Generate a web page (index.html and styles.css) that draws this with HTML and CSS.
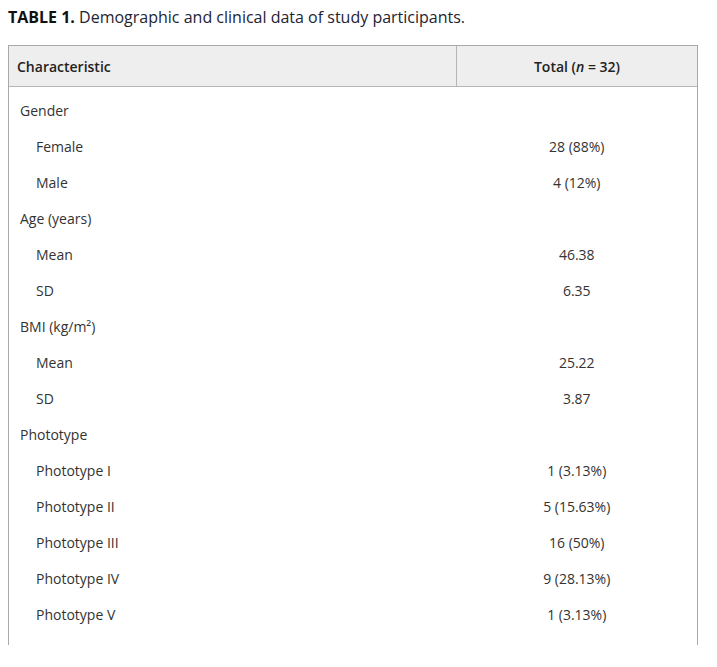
FILE: index.html
```html
<!DOCTYPE html>
<html>
<head>
<meta charset="utf-8">
<link rel="stylesheet" href="styles.css">
</head>
<body>
<div class="caption"><b>TABLE 1.</b> Demographic and clinical data of study participants.</div>
<div class="table-wrap">
<table class="data">
<thead>
<tr><th class="c1">Characteristic</th><th class="c2">Total (<i>n</i> = 32)</th></tr>
</thead>
<tbody>
<tr class="first"><td class="lvl1">Gender</td><td></td></tr>
<tr><td class="lvl2">Female</td><td class="val">28 (88%)</td></tr>
<tr><td class="lvl2">Male</td><td class="val">4 (12%)</td></tr>
<tr><td class="lvl1">Age (years)</td><td></td></tr>
<tr><td class="lvl2">Mean</td><td class="val">46.38</td></tr>
<tr><td class="lvl2">SD</td><td class="val">6.35</td></tr>
<tr><td class="lvl1">BMI (kg/m²)</td><td></td></tr>
<tr><td class="lvl2">Mean</td><td class="val">25.22</td></tr>
<tr><td class="lvl2">SD</td><td class="val">3.87</td></tr>
<tr><td class="lvl1">Phototype</td><td></td></tr>
<tr><td class="lvl2">Phototype I</td><td class="val">1 (3.13%)</td></tr>
<tr><td class="lvl2">Phototype II</td><td class="val">5 (15.63%)</td></tr>
<tr><td class="lvl2">Phototype III</td><td class="val">16 (50%)</td></tr>
<tr><td class="lvl2">Phototype IV</td><td class="val">9 (28.13%)</td></tr>
<tr><td class="lvl2">Phototype V</td><td class="val">1 (3.13%)</td></tr>
</tbody>
</table>
</div>
</body>
</html>
```
FILE: styles.css
```css
html, body {
  margin: 0;
  padding: 0;
  background: #fff;
}
body {
  padding: 0 8px;
  font-family: "Open Sans", "Liberation Sans", sans-serif;
  color: #333;
}
.caption {
  font-size: 16px;
  line-height: 22px;
  padding-top: 6px;
  color: #1d2433;
}
.caption b {
  font-weight: 700;
  color: #111;
}
.table-wrap {
  margin-top: 17px;
  width: 690px;
  height: 600px;
  box-sizing: border-box;
  border: 1px solid #a9a9a9;
  border-bottom: none;
  overflow: hidden;
}
.data {
  width: 100%;
  border-collapse: collapse;
  font-size: 14px;
}
.data th {
  background: #eeeeee;
  height: 40px;
  padding: 0 8px;
  font-weight: 600;
  color: #222;
  border-bottom: 1px solid #b5b5b5;
}
.data th.c1 {
  text-align: left;
  width: 431px;
  border-right: 1px solid #b5b5b5;
}
.data th.c2 {
  text-align: center;
}
.data td {
  height: 36px;
  padding: 0;
  vertical-align: middle;
}
.data tr.first td {
  padding-top: 5px;
}
.lvl1 {
  padding-left: 11px !important;
}
.lvl2 {
  padding-left: 27px !important;
}
.val {
  text-align: center;
}
```
